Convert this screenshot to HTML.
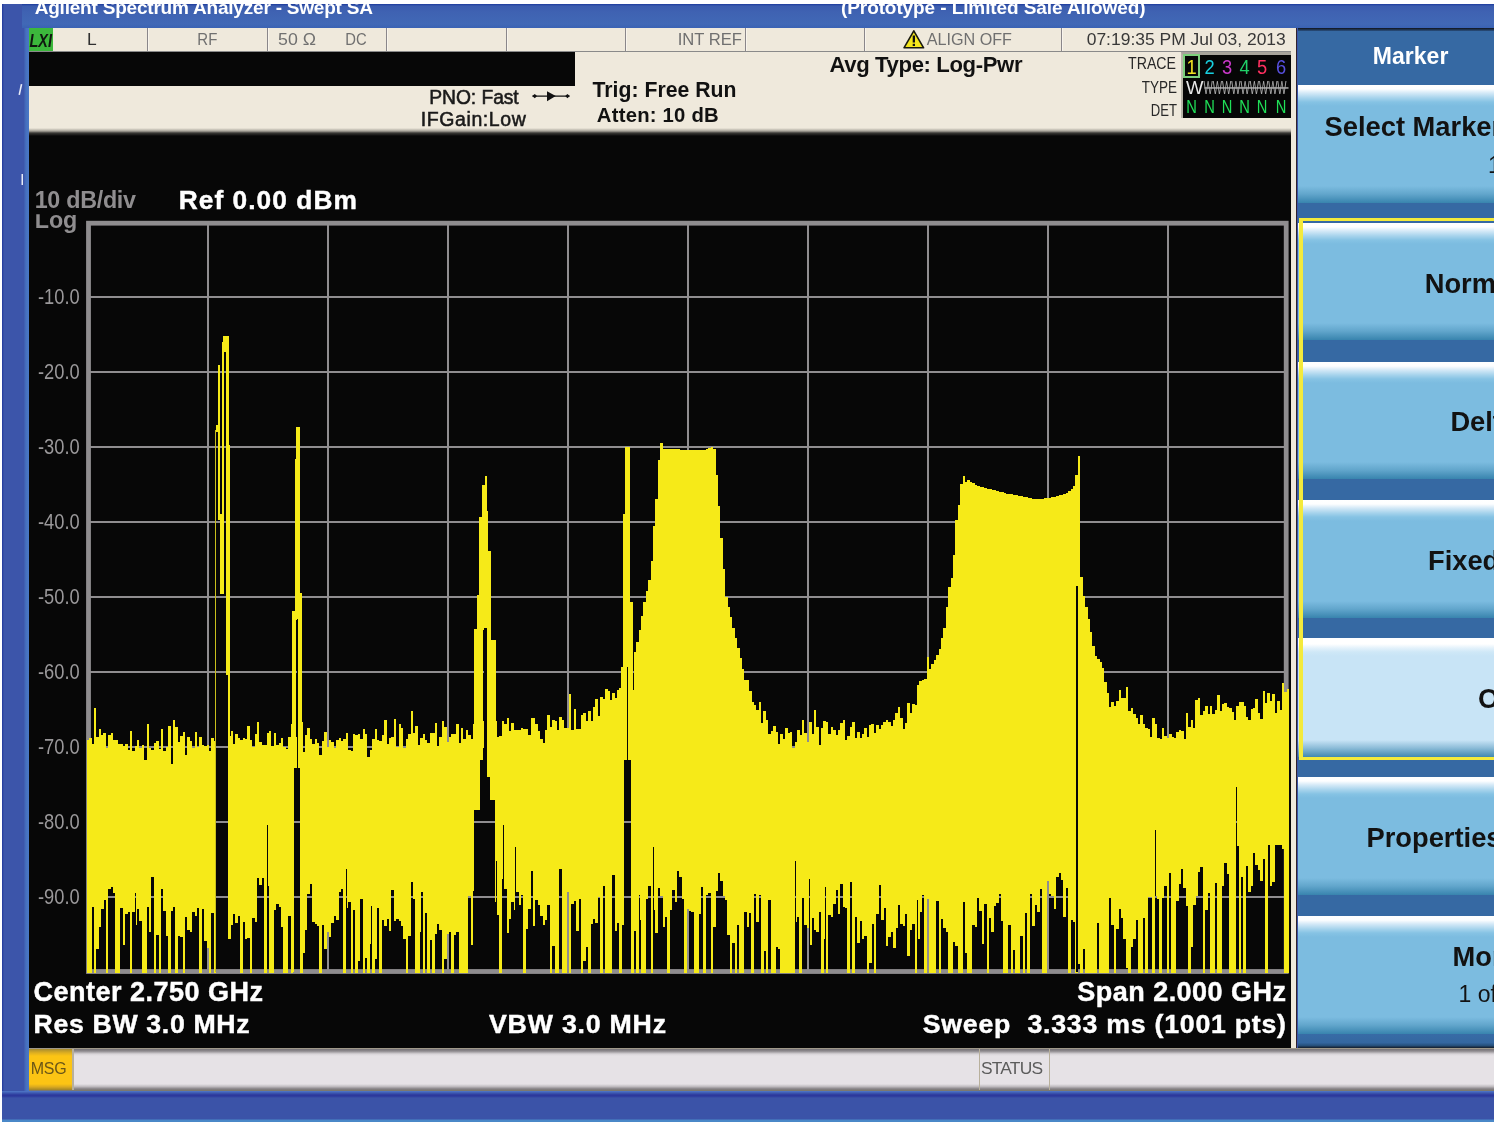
<!DOCTYPE html>
<html><head><meta charset="utf-8"><title>Agilent Spectrum Analyzer - Swept SA</title>
<style>
html,body{margin:0;padding:0;background:#fff;}
body{width:1500px;height:1122px;position:relative;overflow:hidden;font-family:"Liberation Sans",Arial,sans-serif;}
div{position:absolute;box-sizing:border-box;}
#win{left:2px;top:4px;width:1492px;height:1118px;background:#3b54a8;overflow:hidden}
#title{left:0;top:0;width:1492px;height:24px;background:linear-gradient(#1c3a9c 0,#3b5cae 2px,#3f62b2 8px,#4168b6 20px,#3a62b4 24px);}
#leftstrip{left:0;top:0;width:27px;height:1118px;background:linear-gradient(90deg,#20389c 0,#3c55aa 2px,#3c55aa 21.5px,#4670be 24px,#4a78c6 27px);}
#titlefill{left:20px;top:0;width:1472px;height:24px;background:linear-gradient(#1c3a9c 0,#3b5cae 2px,#3f62b2 8px,#4168b6 20px,#3a62b4 24px);}
#bottomblue{left:0;top:1087px;width:1492px;height:31px;background:linear-gradient(#5078c8 0,#3c58b0 2px,#2c389c 4px,#2c389c 5px,#3b53a8 7px,#3b53a8 28px,#4a88c8 29px);}
#main{left:29px;top:28px;width:1268px;height:1020px;background:#070707;}
#statrow{left:0;top:0;width:1268px;height:24px;background:#efe9dc;border-bottom:1px solid #8a8a8a}
.sep{top:0;width:2px;height:23px;background:linear-gradient(90deg,#8a868a 0,#8a868a 1.4px,#f8f4ec 1.4px)}
#lxi{left:0;top:0;width:24px;height:23px;background:#3cb83c}
#cream1{left:0;top:58px;width:1268px;height:45px;background:#efe9dc}
#cream2{left:546px;top:24px;width:722px;height:40px;background:#efe9dc}
#shadow{left:0;top:100px;width:1268px;height:8px;background:linear-gradient(#efe9dc 0,#a8a49a 3px,#3a3936 5px,#070707 8px)}
#tracebox{left:1152.4px;top:24px;width:109.6px;height:66.3px;background:#060606;border-left:2px solid #b8b4a8;border-top:3px solid #a8a49c}
#sel{left:0px;top:-0.6px;width:16.5px;height:23.5px;border:2px solid #7cd07c}
#rstrip{left:1261.7px;top:0;width:6.8px;height:1020px;background:#efe9dc;border-right:1px solid #30242c}
#panel{left:1298px;top:28px;width:196px;height:1020px;background:#3669a3;overflow:hidden}
#ptop{left:0;top:0;width:196px;height:3px;background:linear-gradient(#10141c,#2a5080)}
.btn{left:0;width:196px;background:linear-gradient(#fff 0,#fdfeff 4px,#d4e9f7 8px,#a6d3ec 13px,#86c3e4 17px,#7cbce0 21px,#7cbce0 calc(100% - 17px),#62a6cc calc(100% - 9px),#3884ae 100%);}
.btn.light{background:linear-gradient(#fff 0,#fff 6px,#e4f2fb 10px,#cfe8f7 14px,#c8e4f6 18px,#c8e4f6 calc(100% - 17px),#8cbcd8 calc(100% - 9px),#4088b0 100%);}
#ysel{left:1px;top:189.5px;width:210px;height:542px;border:3.5px solid #f4ea3c;border-left-width:4px;border-right:none;}
#pbot{left:0;top:1006px;width:196px;height:14px;background:linear-gradient(#386ca6 0,#3467a0 62%,#26507c 82%,#141c28 100%)}
#status{left:29px;top:1047.7px;width:1465px;height:43.3px;background:linear-gradient(#b0a890 0,#7c787c 1.5px,#8c888c 3px,#d8d4d8 6px,#e6e2e6 8px,#e6e2e6 36px,#c0bcc0 38.5px,#848084 41px,#7c7870 42.5px,#a09880 43.3px);}
#msg{left:0;top:1.3px;width:43px;height:41px;background:linear-gradient(#a88c30 0,#e0b020 4px,#fcc414 7px,#fcc414 35px,#d8a820 38px,#a08428 41px)}
.ssep{top:1px;width:1.5px;height:41px;background:#b8b09c}
</style></head><body>
<div id="win">
<div id="leftstrip"></div><div id="titlefill"></div>
<div id="bottomblue"></div>
</div>
<div id="main">
 <div id="cream2"></div><div id="cream1"></div><div id="shadow"></div>
 <div id="statrow"><div id="lxi"></div>
 <div class="sep" style="left:118px"></div><div class="sep" style="left:237.7px"></div><div class="sep" style="left:357px"></div><div class="sep" style="left:476.5px"></div><div class="sep" style="left:596px"></div><div class="sep" style="left:715.8px"></div><div class="sep" style="left:835px"></div><div class="sep" style="left:1031.7px"></div>
 </div>
 <div id="rstrip"></div>
 <div id="tracebox"><div id="sel"></div></div>
</div>
<div id="panel"><div id="ptop"></div><div class="btn" style="top:56.8px;height:118.00000000000001px"></div><div class="btn" style="top:194.8px;height:117.69999999999999px"></div><div class="btn" style="top:334px;height:117px"></div><div class="btn" style="top:472px;height:117.5px"></div><div class="btn light" style="top:610px;height:118.5px"></div><div class="btn" style="top:749.3px;height:117.70000000000005px"></div><div class="btn" style="top:888.3px;height:117.70000000000005px"></div><div id="ysel"></div><div id="pbot"></div><svg width="196" height="1020" style="position:absolute;left:0;top:0;will-change:transform" font-family="Liberation Sans, Arial, sans-serif"><text x="112.59999999999991" y="35.7" font-size="24.4" font-weight="bold" fill="#fff" text-anchor="middle" textLength="75.5" lengthAdjust="spacingAndGlyphs">Marker</text><text x="26.6" y="107.6" font-size="27.3" font-weight="bold" fill="#121212">Select Marker</text><text x="190.0" y="144.5" font-size="23.0" font-weight="normal" fill="#121212">1</text><text x="126.7" y="265.0" font-size="27.3" font-weight="bold" fill="#121212">Normal</text><text x="152.4" y="403.4" font-size="27.3" font-weight="bold" fill="#121212">Delta</text><text x="130.0" y="542.4" font-size="27.3" font-weight="bold" fill="#121212">Fixed</text><text x="180.0" y="680.4" font-size="27.3" font-weight="bold" fill="#121212">Off</text><text x="68.5" y="818.5" font-size="27.3" font-weight="bold" fill="#121212">Properties</text><text x="154.5" y="938.3" font-size="27.3" font-weight="bold" fill="#121212">More</text><text x="160.6" y="974.3" font-size="23.0" font-weight="normal" fill="#121212">1 of 2</text></svg></div>
<div id="status"><div id="msg"></div><div class="ssep" style="left:43px"></div><div class="ssep" style="left:949.5px"></div><div class="ssep" style="left:1019.5px"></div></div>
<svg width="1500" height="1122" viewBox="0 0 1500 1122" style="position:absolute;left:0;top:0;will-change:transform" font-family="Liberation Sans, Arial, sans-serif">
<rect x="88.5" y="223.2" width="1197.7" height="748.3" fill="none" stroke="#8f8d8f" stroke-width="4.8"/><defs><clipPath id="logclip"><rect x="30" y="214.3" width="60" height="30"/></clipPath></defs><g shape-rendering="crispEdges"><rect x="206.7" y="223.2" width="2" height="748.3" fill="#8f8d8f"/><rect x="88.5" y="296.3" width="1197.7" height="2" fill="#8f8d8f"/><rect x="326.7" y="223.2" width="2" height="748.3" fill="#8f8d8f"/><rect x="88.5" y="371.3" width="1197.7" height="2" fill="#8f8d8f"/><rect x="446.7" y="223.2" width="2" height="748.3" fill="#8f8d8f"/><rect x="88.5" y="446.3" width="1197.7" height="2" fill="#8f8d8f"/><rect x="566.7" y="223.2" width="2" height="748.3" fill="#8f8d8f"/><rect x="88.5" y="521.3" width="1197.7" height="2" fill="#8f8d8f"/><rect x="686.7" y="223.2" width="2" height="748.3" fill="#8f8d8f"/><rect x="88.5" y="596.3" width="1197.7" height="2" fill="#8f8d8f"/><rect x="806.7" y="223.2" width="2" height="748.3" fill="#8f8d8f"/><rect x="88.5" y="671.3" width="1197.7" height="2" fill="#8f8d8f"/><rect x="926.7" y="223.2" width="2" height="748.3" fill="#8f8d8f"/><rect x="88.5" y="746.3" width="1197.7" height="2" fill="#8f8d8f"/><rect x="1046.7" y="223.2" width="2" height="748.3" fill="#8f8d8f"/><rect x="88.5" y="821.3" width="1197.7" height="2" fill="#8f8d8f"/><rect x="1166.7" y="223.2" width="2" height="748.3" fill="#8f8d8f"/><rect x="88.5" y="896.3" width="1197.7" height="2" fill="#8f8d8f"/><path d="M86.6 740H89V972.5H86.6ZM89 738.3H91.5V972.5H89ZM91.4 743.8H93.9V907.2H91.4ZM93.8 708.4H96.3V972.5H93.8ZM96.2 736.8H98.7V949.2H96.2ZM98.6 729.2H101.1V927.4H98.6ZM101 734.5H103.5V909.2H101ZM103.4 733.4H105.9V900.3H103.4ZM105.8 747.8H108.3V972.5H105.8ZM108.2 735.3H110.7V888.8H108.2ZM110.6 733.3H113.1V887.1H110.6ZM113 740.3H115.5V893.2H113ZM115.4 740.1H117.9V972.5H115.4ZM117.8 743.7H120.3V972.5H117.8ZM120.2 743.9H122.7V908H120.2ZM122.6 745.8H125.1V945.3H122.6ZM125 744.2H127.5V914.3H125ZM127.4 749.8H129.9V912.1H127.4ZM129.8 730.9H132.3V972.5H129.8ZM132.2 751.4H134.7V911.5H132.2ZM134.6 746.4H135.9V893H134.6ZM135.8 746.4H137.1V924.8H135.8ZM137 740.4H139.4V908.8H137ZM139.4 748.2H141.8V921.4H139.4ZM141.8 744.6H144.2V972.5H141.8ZM144.2 759.5H146.6V972.5H144.2ZM146.6 723.5H149V906.6H146.6ZM149 748.1H151.4V931.6H149ZM151.4 749.9H153.8V877.4H151.4ZM153.8 742.8H156.2V972.5H153.8ZM156.2 740.7H158.6V935.2H156.2ZM158.6 748.5H161V972.5H158.6ZM161 729.4H163.4V889.3H161ZM163.4 751.2H165.8V911.1H163.4ZM165.8 747.3H168.2V935.5H165.8ZM168.2 725.9H170.6V972.5H168.2ZM170.6 763.7H173V910.5H170.6ZM173 719.6H175.4V907.2H173ZM175.4 726.7H177.8V972.5H175.4ZM177.8 741.8H180.2V936.3H177.8ZM180.2 735.9H182.6V936.7H180.2ZM182.6 731.5H185V972.5H182.6ZM185 755.1H187.4V916.5H185ZM187.4 736.8H189.8V929.9H187.4ZM189.8 741.1H192.2V932.4H189.8ZM192.2 748.3H194.6V911.6H192.2ZM194.6 731.8H197V916.1H194.6ZM197 746.7H199.4V908.2H197ZM199.4 736.7H201.8V972.5H199.4ZM201.8 744.6H204.2V909.2H201.8ZM204.2 746.3H206.6V941.4H204.2ZM206.6 745.3H209V948.2H206.6ZM209 750.8H211.4V972.5H209ZM211.4 738.1H213.8V913.1H211.4ZM213.8 740.7H216.2V972.5H213.8ZM228.2 736.3H230.6V939.1H228.2ZM230.6 731.3H233V925.4H230.6ZM233 744.1H235.4V914.2H233ZM235.4 733.5H237.8V923.4H235.4ZM237.8 737.7H240.2V915.9H237.8ZM240.2 740.3H242.6V972.5H240.2ZM242.6 737.6H245V921.5H242.6ZM245 739H247.4V939.1H245ZM247.4 726.1H249.8V938H247.4ZM249.8 739.8H252.2V972.5H249.8ZM252.2 747.2H254.6V918.2H252.2ZM254.6 733.8H257V922.1H254.6ZM257 722.4H259.4V878H257ZM259.4 742.2H261.8V885.4H259.4ZM261.8 745.3H264.2V878.4H261.8ZM264.2 744.6H266.6V972.5H264.2ZM266.6 732.9H267.8V825.1H266.6ZM267.8 732.9H269V886H267.8ZM269 730.8H271.4V972.5H269ZM271.4 745.9H273.8V972.5H271.4ZM273.8 732.8H276.2V909.5H273.8ZM276.2 745.2H278.6V904.2H276.2ZM278.6 743.1H281V907H278.6ZM281 738H283.4V926.7H281ZM283.4 747.1H285.8V972.5H283.4ZM285.8 748.7H288.2V972.5H285.8ZM288.2 736.6H290.6V915.6H288.2ZM290.6 724H293V972.5H290.6ZM293 740.9H294.2V910H293ZM294.2 740.9H295.4V768H294.2ZM295.4 736.5H297.8V768H295.4ZM297.8 753.2H300.2V768H297.8ZM300.2 722.2H302.6V972.5H300.2ZM302.6 752.1H305V953.1H302.6ZM305 735.1H307.4V930.4H305ZM307.4 728.4H309.8V893.7H307.4ZM309.8 739.2H312.2V884H309.8ZM312.2 743.8H314.6V921.7H312.2ZM314.6 739.4H317V924.2H314.6ZM317 742.9H319.4V925.9H317ZM319.4 754.9H321.8V972.5H319.4ZM321.8 740.5H324.2V925.4H321.8ZM324.2 731.9H326.6V949.1H324.2ZM326.6 746.5H329V931.6H326.6ZM329 740.1H331.4V936.5H329ZM331.4 741.9H333.8V923.3H331.4ZM333.8 747.6H336.2V916.2H333.8ZM336.2 739.8H338.6V920.3H336.2ZM338.6 737.7H341V891.9H338.6ZM341 740.7H343.4V889H341ZM343.4 739.3H345.8V972.5H343.4ZM345.8 732.7H347V868.9H345.8ZM347 732.7H348.2V907.5H347ZM348.2 750.1H350.6V902.4H348.2ZM350.6 751H353V972.5H350.6ZM353 733.8H355.4V910.2H353ZM355.4 734.8H357.8V972.5H355.4ZM357.8 733.7H360.2V960.7H357.8ZM360.2 739.3H362.6V899.2H360.2ZM362.6 728.8H365V972.5H362.6ZM365 734.3H367.4V958H365ZM367.4 756.6H369.8V972.5H367.4ZM369.8 749.8H371V943.9H369.8ZM371 749.8H372.2V906.3H371ZM372.2 738.6H374.6V972.5H372.2ZM374.6 729.2H377V958.5H374.6ZM377 739.8H379.4V907.6H377ZM379.4 740.9H381.8V972.5H379.4ZM381.8 734.8H384.2V920.1H381.8ZM384.2 719.9H386.6V926.3H384.2ZM386.6 743.5H389V919.4H386.6ZM389 737.8H391.4V931.2H389ZM391.4 736.7H393.8V890.4H391.4ZM393.8 718.9H396.2V921H393.8ZM396.2 747.2H398.6V919.3H396.2ZM398.6 724.2H401V920.8H398.6ZM401 728H403.4V926H401ZM403.4 748.1H405.8V938.7H403.4ZM405.8 739H408.2V972.5H405.8ZM408.2 733.5H410.6V936.4H408.2ZM410.6 710.6H413V882.4H410.6ZM413 733.3H415.4V899H413ZM415.4 726H417.8V972.5H415.4ZM417.8 745H420.2V972.5H417.8ZM420.2 738.4H421.4V931.9H420.2ZM421.4 738.4H422.6V892.2H421.4ZM422.6 734.4H425V972.5H422.6ZM425 739.8H427.4V913H425ZM427.4 742.6H429.8V972.5H427.4ZM429.8 732.5H432.2V939.7H429.8ZM432.2 732.9H434.6V972.5H432.2ZM434.6 723.3H437V934.3H434.6ZM437 745.9H439.4V923.6H437ZM439.4 736.5H441.8V930H439.4ZM441.8 721.4H444.2V972.5H441.8ZM444.2 726.7H446.6V959.4H444.2ZM446.6 742H449V934.4H446.6ZM449 736.5H451.4V931.9H449ZM451.4 734.1H453.8V972.5H451.4ZM453.8 734H456.2V934.8H453.8ZM456.2 724.1H458.6V932.1H456.2ZM458.6 743.4H461V972.5H458.6ZM461 727.6H463.4V972.5H461ZM463.4 739H465.8V972.5H463.4ZM465.8 730.1H468.2V972.5H465.8ZM468.2 735.1H470.6V896.2H468.2ZM470.6 738.6H473V945.1H470.6ZM473 723.8H474.2V891.1H473ZM474.2 723.8H475.4V807H474.2ZM475.4 737.3H477.8V792H475.4ZM477.8 714.3H479V792H477.8ZM479 714.3H480.2V777H479ZM480.2 734.8H482.6V748H480.2ZM482.6 720.9H485V748H482.6ZM485 742H487.4V748H485ZM487.4 724.5H489.8V777H487.4ZM489.8 744.8H492.2V792H489.8ZM492.2 719.2H494.6V792H492.2ZM494.6 721.1H495.8V902.4H494.6ZM495.8 721.1H497V861.4H495.8ZM497 736.8H499.4V915H497ZM499.4 736.2H501.8V972.5H499.4ZM501.8 720.6H503V879.4H501.8ZM503 720.6H504.2V825.4H503ZM504.2 724H506.6V888.5H504.2ZM506.6 717.5H509V933.4H506.6ZM509 730.7H511.4V918.7H509ZM511.4 723.2H513.8V901.9H511.4ZM513.8 729.5H515V910.2H513.8ZM515 729.5H516.2V847.2H515ZM516.2 729.9H518.6V891.7H516.2ZM518.6 730.3H521V904.8H518.6ZM521 728.4H523.4V894.7H521ZM523.4 728.7H525.8V972.5H523.4ZM525.8 729.3H528.2V928.6H525.8ZM528.2 734.6H530.6V909H528.2ZM530.6 718.4H533V870.7H530.6ZM533 717.7H535.4V926.1H533ZM535.4 723.8H537.8V899.6H535.4ZM537.8 731.3H540.2V905.1H537.8ZM540.2 738.5H542.6V915.7H540.2ZM542.6 743.2H545V925.3H542.6ZM545 730.3H547.4V919.9H545ZM547.4 715.2H549.8V904.8H547.4ZM549.8 727H552.2V972.5H549.8ZM552.2 719.7H554.6V945.9H552.2ZM554.6 721.1H557V972.5H554.6ZM557 730.3H559.4V972.5H557ZM559.4 716.5H561.8V869.1H559.4ZM561.8 719.5H564.2V972.5H561.8ZM564.2 728.3H566.6V972.5H564.2ZM566.6 727.5H569V892.2H566.6ZM569 693.8H571.4V972.5H569ZM571.4 730H573.8V904.2H571.4ZM573.8 708.7H576.2V901.3H573.8ZM576.2 728.9H578.6V930.7H576.2ZM578.6 729.2H581V899H578.6ZM581 714.5H583.4V972.5H581ZM583.4 713H585.8V961.2H583.4ZM585.8 720.5H588.2V946.7H585.8ZM588.2 710.5H590.6V972.5H588.2ZM590.6 720.9H593V924H590.6ZM593 706.6H595.4V918.5H593ZM595.4 699.2H597.8V922.6H595.4ZM597.8 715.8H600.2V896.9H597.8ZM600.2 697.1H602.6V972.5H600.2ZM602.6 698.7H605V886H602.6ZM605 689.3H607.5V972.5H605ZM607.4 690.7H609.9V972.5H607.4ZM609.8 699.7H612.3V972.5H609.8ZM612.2 692.5H614.7V874.8H612.2ZM614.6 697.9H617.1V931.3H614.6ZM617 689.6H619.5V923.4H617ZM619.4 687.7H621.9V972.5H619.4ZM621.8 684.6H624.3V924.9H621.8ZM624.2 694H626.7V754H624.2ZM626.6 683.3H629.1V754H626.6ZM629 686.2H631.5V754H629ZM631.4 689.8H633.9V972.5H631.4ZM633.8 652.3H636.3V931.1H633.8ZM636.2 641.9H638.7V972.5H636.2ZM638.6 630.3H639.9V894.5H638.6ZM639.8 630.3H641.1V920H639.8ZM641 616.3H643.5V972.5H641ZM643.4 602.3H645.9V972.5H643.4ZM645.8 591H648.3V898.8H645.8ZM648.2 580.2H650.7V885.6H648.2ZM650.6 561.2H653.1V972.5H650.6ZM653 525.8H654.3V847.2H653ZM654.2 525.8H655.5V910.1H654.2ZM655.4 498.5H657.9V933.1H655.4ZM657.8 460.3H660.3V887.6H657.8ZM660.2 443.4H662.7V896.2H660.2ZM662.6 449H665.1V926.6H662.6ZM665 449.1H667.5V917.4H665ZM667.4 449.2H669.9V972.5H667.4ZM669.8 449.2H672.3V909.6H669.8ZM672.2 449.3H674.7V890.4H672.2ZM674.6 449.3H677.1V901.5H674.6ZM677 449.4H679.5V871.3H677ZM679.4 449.5H681.9V876.5H679.4ZM681.8 449.5H684.3V898.9H681.8ZM684.2 449.6H686.7V972.5H684.2ZM686.6 449.7H689.1V909.4H686.6ZM689 449.7H691.5V911.3H689ZM691.4 449.8H693.9V911.7H691.4ZM693.8 449.9H696.3V972.5H693.8ZM696.2 449.9H698.7V972.5H696.2ZM698.6 450H701.1V913.7H698.6ZM701 449.8H703.5V886.5H701ZM703.4 449.5H705.9V972.5H703.4ZM705.8 449.2H708.3V895.2H705.8ZM708.2 448.2H710.7V892.7H708.2ZM710.6 446.6H713.1V972.5H710.6ZM713 449H715.5V927H713ZM715.4 475.4H717.9V890.9H715.4ZM717.8 506.3H720.3V872.9H717.8ZM720.2 538.1H722.7V881.1H720.2ZM722.6 568.5H725.1V896.1H722.6ZM725 596.9H727.5V899.7H725ZM727.4 607.1H729.9V935.4H727.4ZM729.8 617.4H732.3V972.5H729.8ZM732.2 627.7H734.7V942.8H732.2ZM734.6 637.6H737.1V972.5H734.6ZM737 647.5H739.5V924.5H737ZM739.4 657.9H741.9V972.5H739.4ZM741.8 669.4H744.3V972.5H741.8ZM744.2 680.2H746.7V912.1H744.2ZM746.6 680H749.1V926.7H746.6ZM749 691.2H751.5V913H749ZM751.4 701.5H753.9V972.5H751.4ZM753.8 705.2H756.3V894.2H753.8ZM756.2 710H758.7V922.3H756.2ZM758.6 701.9H761.1V895H758.6ZM761 723.3H763.5V972.5H761ZM763.4 711.2H765.9V951H763.4ZM765.8 720.2H768.3V972.5H765.8ZM768.2 734.1H770.7V899.7H768.2ZM770.6 731.3H773.1V972.5H770.6ZM773 726.4H775.5V972.5H773ZM775.4 731.5H777.9V946.5H775.4ZM777.8 744.2H780.3V949H777.8ZM780.2 733.9H782.7V972.5H780.2ZM782.6 738.9H785.1V972.5H782.6ZM785 728H787.5V972.5H785ZM787.4 733.2H789.9V972.5H787.4ZM789.8 732.1H792.3V972.5H789.8ZM792.2 748H794.7V972.5H792.2ZM794.6 741.7H795.9V860.9H794.6ZM795.8 741.7H797.1V922.2H795.8ZM797 730.3H799.5V916.6H797ZM799.4 734.7H801.9V972.5H799.4ZM801.8 719.9H804.3V898.1H801.8ZM804.2 732.9H806.7V925H804.2ZM806.6 741.6H809.1V927.7H806.6ZM809 722.4H810.3V879.1H809ZM810.2 722.4H811.5V945H810.2ZM811.4 734.3H813.9V918.2H811.4ZM813.8 709.6H816.3V929.5H813.8ZM816.2 726.8H818.7V932.1H816.2ZM818.6 744.7H821.1V912.3H818.6ZM821 728.4H823.5V972.5H821ZM823.4 721H824.7V939.4H823.4ZM824.6 721H825.9V887.4H824.6ZM825.8 721.6H828.3V972.5H825.8ZM828.2 733.8H830.7V914.8H828.2ZM830.6 726.5H833.1V917.1H830.6ZM833 729.9H835.5V903.7H833ZM835.4 735.1H837.9V890.2H835.4ZM837.8 730.4H840.3V914.3H837.8ZM840.2 722.8H842.7V883.5H840.2ZM842.6 720.3H845.1V907.2H842.6ZM845 740.2H847.5V908.3H845ZM847.4 735.9H849.9V972.5H847.4ZM849.8 727.3H852.3V882.3H849.8ZM852.2 721.7H854.7V972.5H852.2ZM854.6 737.6H857.1V916.5H854.6ZM857 731.6H859.5V943.3H857ZM859.4 738.4H861.9V921H859.4ZM861.8 733.7H864.3V939.3H861.8ZM864.2 727.8H866.7V935.6H864.2ZM866.6 737.3H869.1V972.5H866.6ZM869 725H871.5V962.9H869ZM871.4 723.9H873.9V923.9H871.4ZM873.8 733.1H876.3V972.5H873.8ZM876.2 725.1H878.7V913.5H876.2ZM878.6 729.4H881.1V884.6H878.6ZM881 724.8H883.5V920.4H881ZM883.4 721.6H885.9V907.8H883.4ZM885.8 720.1H888.3V945.7H885.8ZM888.2 721.7H890.7V937.2H888.2ZM890.6 725.7H893.1V931.9H890.6ZM893 719.9H895.5V948.4H893ZM895.4 713.3H897.9V927.8H895.4ZM897.8 707.4H900.3V905.1H897.8ZM900.2 718.3H902.7V924.2H900.2ZM902.6 728.5H905.1V926H902.6ZM905 722.9H907.5V913.8H905ZM907.4 703.1H909.9V955.6H907.4ZM909.8 712.5H912.3V929.7H909.8ZM912.2 704.1H914.7V924.2H912.2ZM914.6 705.3H917.1V972.5H914.6ZM917 685.4H918.3V899.9H917ZM918.2 685.4H919.5V938.6H918.2ZM919.4 681.4H921.9V911.9H919.4ZM921.8 680.1H924.3V895.2H921.8ZM924.2 679H926.7V972.5H924.2ZM926.6 656.7H929.1V898.5H926.6ZM929 668.7H931.5V972.5H929ZM931.4 664.2H933.9V972.5H931.4ZM933.8 659.6H936.3V972.5H933.8ZM936.2 655H938.7V900.5H936.2ZM938.6 648.5H941.1V972.5H938.6ZM941 638.1H943.5V918.7H941ZM943.4 627.7H945.9V927.7H943.4ZM945.8 607H948.3V931.8H945.8ZM948.2 586.5H950.7V972.5H948.2ZM950.6 577.5H953.1V972.5H950.6ZM953 555.2H955.5V942H953ZM955.4 520.4H957.9V946.4H955.4ZM957.8 505.3H960.3V972.5H957.8ZM960.2 484.3H962.7V972.5H960.2ZM962.6 476.2H965.1V902.2H962.6ZM965 481.8H967.5V953.3H965ZM967.4 480.4H969.9V972.5H967.4ZM969.8 481.8H972.3V972.5H969.8ZM972.2 483.2H974.7V924.5H972.2ZM974.6 484.7H977.1V926.7H974.6ZM977 486.1H979.5V897.5H977ZM979.4 486.7H981.9V910.9H979.4ZM981.8 487.3H984.3V944.2H981.8ZM984.2 487.9H986.7V903.7H984.2ZM986.6 488.5H989.1V972.5H986.6ZM989 489.2H991.5V917.9H989ZM991.4 489.8H993.9V932.1H991.4ZM993.8 490.4H996.3V906H993.8ZM996.2 491H998.7V902.5H996.2ZM998.6 491.6H1001.1V893.6H998.6ZM1001 492.3H1003.5V921.2H1001ZM1003.4 492.9H1005.9V972.5H1003.4ZM1005.8 493.5H1008.3V972.5H1005.8ZM1008.2 494H1010.7V924.9H1008.2ZM1010.6 494.4H1013.1V972.5H1010.6ZM1013 494.9H1015.5V950.1H1013ZM1015.4 495.3H1017.9V972.5H1015.4ZM1017.8 495.8H1020.3V972.5H1017.8ZM1020.2 496.2H1022.7V936.1H1020.2ZM1022.6 496.7H1025.1V972.5H1022.6ZM1025 497.1H1027.5V912.9H1025ZM1027.4 497.6H1029.9V972.5H1027.4ZM1029.8 498.1H1032.3V894.1H1029.8ZM1032.2 498.5H1034.7V926.2H1032.2ZM1034.6 499H1037.1V905.4H1034.6ZM1037 498.8H1039.5V912H1037ZM1039.4 498.7H1041.9V889.1H1039.4ZM1041.8 498.5H1044.3V972.5H1041.8ZM1044.2 498.3H1046.7V972.5H1044.2ZM1046.6 498.2H1049.1V880.8H1046.6ZM1049 497.9H1051.5V893.5H1049ZM1051.4 497.3H1053.9V895.9H1051.4ZM1053.8 496.6H1056.3V908.9H1053.8ZM1056.2 495.9H1058.7V876.7H1056.2ZM1058.6 495.2H1061.1V873.3H1058.6ZM1061 494.6H1063.5V880.4H1061ZM1063.4 493.9H1065.9V916.5H1063.4ZM1065.8 492.7H1068.3V887.7H1065.8ZM1068.2 490.9H1070.7V972.5H1068.2ZM1070.6 489.1H1073.1V919.7H1070.6ZM1073 485.7H1075.5V922H1073ZM1075.4 475.2H1077.9V972.5H1075.4ZM1077.8 456H1080.3V964.1H1077.8ZM1080.2 577.2H1082.7V972.5H1080.2ZM1082.6 596H1085.1V948.6H1082.6ZM1085 606.7H1087.5V972.5H1085ZM1087.4 619.2H1089.9V972.5H1087.4ZM1089.8 632H1092.3V972.5H1089.8ZM1092.2 645.8H1094.7V972.5H1092.2ZM1094.6 656H1097.1V972.5H1094.6ZM1097 659.1H1099.5V923.2H1097ZM1099.4 662.2H1101.9V972.5H1099.4ZM1101.8 668H1104.3V972.5H1101.8ZM1104.2 681.9H1106.7V972.5H1104.2ZM1106.6 692.7H1109.1V972.5H1106.6ZM1109 706.6H1111.5V897.7H1109ZM1111.4 701.5H1113.9V925.1H1111.4ZM1113.8 706.2H1116.3V972.5H1113.8ZM1116.2 701.2H1118.7V929.4H1116.2ZM1118.6 689.6H1121.1V908.7H1118.6ZM1121 697.9H1123.5V918.4H1121ZM1123.4 697.6H1125.9V939H1123.4ZM1125.8 687.1H1128.3V968.1H1125.8ZM1128.2 711H1130.7V972.5H1128.2ZM1130.6 707.5H1133.1V946.7H1130.6ZM1133 713.7H1135.5V939H1133ZM1135.4 717.8H1137.9V920.3H1135.4ZM1137.8 724.3H1140.3V972.5H1137.8ZM1140.2 714.8H1142.7V972.5H1140.2ZM1142.6 723.6H1145.1V917.8H1142.6ZM1145 728.1H1147.5V972.5H1145ZM1147.4 728.9H1149.9V897.3H1147.4ZM1149.8 737.1H1152.3V896.9H1149.8ZM1152.2 718.3H1154.7V972.5H1152.2ZM1154.6 724.1H1155.9V829.7H1154.6ZM1155.8 724.1H1157.1V896.3H1155.8ZM1157 738.4H1159.5V898.8H1157ZM1159.4 739.3H1161.9V972.5H1159.4ZM1161.8 727.9H1164.3V898.1H1161.8ZM1164.2 735.9H1166.7V885.7H1164.2ZM1166.6 737.5H1169.1V972.5H1166.6ZM1169 733.5H1171.5V873.1H1169ZM1171.4 736.6H1173.9V972.5H1171.4ZM1173.8 738.4H1176.3V972.5H1173.8ZM1176.2 732.3H1178.7V901.1H1176.2ZM1178.6 730.1H1181.1V883.8H1178.6ZM1181 731.4H1183.5V869.3H1181ZM1183.4 738.6H1185.9V887.5H1183.4ZM1185.8 713.2H1188.3V906H1185.8ZM1188.2 726.9H1190.7V972.5H1188.2ZM1190.6 719.7H1193.1V946.8H1190.6ZM1193 727.6H1195.5V905.1H1193ZM1195.4 699.8H1197.9V895.9H1195.4ZM1197.8 697.8H1200.3V871.7H1197.8ZM1200.2 715.2H1202.7V867.4H1200.2ZM1202.6 711H1205.1V972.5H1202.6ZM1205 706.4H1207.5V909.9H1205ZM1207.4 714H1209.9V892.5H1207.4ZM1209.8 706.3H1212.3V972.5H1209.8ZM1212.2 713.9H1214.7V972.5H1212.2ZM1214.6 710.3H1217.1V883H1214.6ZM1217 694.5H1219.5V972.5H1217ZM1219.4 711.3H1221.9V972.5H1219.4ZM1221.8 704H1224.3V886.3H1221.8ZM1224.2 702.5H1226.7V862.6H1224.2ZM1226.6 706.5H1229.1V874.3H1226.6ZM1229 708.3H1231.5V972.5H1229ZM1231.4 711.7H1233.9V972.5H1231.4ZM1233.8 719.5H1236.3V972.5H1233.8ZM1236.2 706H1237.5V786.9H1236.2ZM1237.4 706H1238.7V845.5H1237.4ZM1238.6 701.6H1241.1V972.5H1238.6ZM1241 702.4H1243.5V876.5H1241ZM1243.4 705.8H1245.9V972.5H1243.4ZM1245.8 717.3H1248.3V866.2H1245.8ZM1248.2 720.4H1250.7V892.1H1248.2ZM1250.6 708.8H1253.1V885.8H1250.6ZM1253 708.3H1255.5V852.5H1253ZM1255.4 698.9H1257.9V865.2H1255.4ZM1257.8 713H1260.3V869.5H1257.8ZM1260.2 719.3H1262.7V880.6H1260.2ZM1262.6 690.8H1265.1V859.1H1262.6ZM1265 703H1267.5V972.5H1265ZM1267.4 693.4H1269.9V845H1267.4ZM1269.8 701.1H1272.3V886.4H1269.8ZM1272.2 693.6H1274.7V882.4H1272.2ZM1274.6 713.4H1277.1V845H1274.6ZM1277 700.9H1279.5V845H1277ZM1279.4 710.2H1281.9V845H1279.4ZM1281.8 683H1284.3V848.7H1281.8ZM1284.2 692.3H1286.7V972.5H1284.2ZM1286.6 689.4H1288.5V972.5H1286.6Z" fill="#f6ea18"/><rect x="214.6" y="430" width="1.4" height="542" fill="#c9bf1c"/><rect x="216.0" y="425" width="1.6" height="7" fill="#f6ea18"/><rect x="218.3" y="365" width="1.5" height="155" fill="#f6ea18"/><rect x="219.8" y="514" width="4.4" height="80" fill="#f6ea18"/><rect x="222.2" y="342" width="2.0" height="178" fill="#f6ea18"/><rect x="223" y="336" width="5.6" height="16" fill="#f6ea18"/><rect x="226.4" y="336" width="2.3" height="339" fill="#f6ea18"/><rect x="228.4" y="675" width="1.2" height="85" fill="#f6ea18"/><rect x="227.9" y="445" width="2.5" height="235" fill="#f6ea18"/><rect x="296.2" y="427" width="3.4" height="173" fill="#f6ea18"/><rect x="294.6" y="459" width="5.0" height="161" fill="#f6ea18"/><rect x="294.6" y="593" width="7.7" height="27" fill="#f6ea18"/><rect x="292" y="611" width="4.3" height="157" fill="#f6ea18"/><rect x="298.3" y="619" width="4.1" height="149" fill="#f6ea18"/><rect x="292" y="740" width="2" height="232" fill="#f6ea18"/><rect x="300" y="740" width="2.4" height="160" fill="#f6ea18"/><rect x="484.5" y="476" width="2.5" height="44" fill="#f6ea18"/><rect x="482.2" y="485" width="4.8" height="145" fill="#f6ea18"/><rect x="482.2" y="511" width="6.1" height="114" fill="#f6ea18"/><rect x="478.6" y="517" width="9.7" height="108" fill="#f6ea18"/><rect x="478.6" y="551" width="12.5" height="74" fill="#f6ea18"/><rect x="477" y="595" width="6.4" height="165" fill="#f6ea18"/><rect x="473.8" y="629" width="9.6" height="131" fill="#f6ea18"/><rect x="486" y="623" width="5.1" height="137" fill="#f6ea18"/><rect x="487.4" y="640" width="8.4" height="120" fill="#f6ea18"/><rect x="473.8" y="720" width="6.2" height="90" fill="#f6ea18"/><rect x="490.3" y="720" width="5.7" height="80" fill="#f6ea18"/><rect x="625.4" y="447" width="4.2" height="253" fill="#f6ea18"/><rect x="622.8" y="514" width="7.2" height="186" fill="#f6ea18"/><rect x="622.6" y="602" width="10.0" height="98" fill="#f6ea18"/><rect x="621" y="667" width="12" height="93" fill="#f6ea18"/><rect x="626.8" y="667" width="1.5" height="93" fill="#070707"/><rect x="1075.8" y="586" width="2.4" height="386" fill="#070707"/><rect x="483.6" y="628" width="3.0" height="132" fill="#070707"/><rect x="296.5" y="619" width="1.9" height="151" fill="#070707"/></g>
<text x="34.7" y="14.3" font-size="19.0" font-weight="bold" fill="#fff" textLength="338.3" lengthAdjust="spacing">Agilent Spectrum Analyzer - Swept SA</text><text x="841.0" y="14.3" font-size="19.0" font-weight="bold" fill="#fff" textLength="304.5" lengthAdjust="spacing">(Prototype - Limited Sale Allowed)</text><text x="87.0" y="45.4" font-size="17.4" font-weight="normal" fill="#303030">L</text><text x="197.3" y="45.4" font-size="17.4" font-weight="normal" fill="#707070" textLength="20.0" lengthAdjust="spacingAndGlyphs">RF</text><text x="278.0" y="45.4" font-size="17.4" font-weight="normal" fill="#707070" textLength="38.0" lengthAdjust="spacingAndGlyphs">50 Ω</text><text x="345.3" y="45.4" font-size="17.4" font-weight="normal" fill="#707070" textLength="21.4" lengthAdjust="spacingAndGlyphs">DC</text><text x="677.7" y="45.4" font-size="17.4" font-weight="normal" fill="#707070" textLength="64.3" lengthAdjust="spacingAndGlyphs">INT REF</text><text x="926.7" y="45.4" font-size="17.4" font-weight="normal" fill="#707070" textLength="85.3" lengthAdjust="spacingAndGlyphs">ALIGN OFF</text><text x="1086.7" y="45.4" font-size="17.4" font-weight="normal" fill="#383838" textLength="199.1" lengthAdjust="spacingAndGlyphs">07:19:35 PM Jul 03, 2013</text><text x="429.3" y="104.0" font-size="19.3" font-weight="normal" fill="#1a1a1a" textLength="89.4" lengthAdjust="spacing" stroke="#1a1a1a" stroke-width="0.55">PNO: Fast</text><text x="420.8" y="125.9" font-size="19.5" font-weight="normal" fill="#1a1a1a" textLength="105.0" lengthAdjust="spacing" stroke="#1a1a1a" stroke-width="0.55">IFGain:Low</text><text x="592.5" y="97.3" font-size="21.2" font-weight="bold" fill="#111" textLength="144.0" lengthAdjust="spacing">Trig: Free Run</text><text x="596.8" y="122.0" font-size="20.3" font-weight="bold" fill="#111" textLength="121.9" lengthAdjust="spacing">Atten: 10 dB</text><text x="829.5" y="72.0" font-size="22.1" font-weight="bold" fill="#111" textLength="193.0" lengthAdjust="spacing">Avg Type: Log-Pwr</text><text x="1128.0" y="69.3" font-size="16.4" font-weight="normal" fill="#282828" textLength="48.0" lengthAdjust="spacingAndGlyphs">TRACE</text><text x="1141.7" y="92.5" font-size="16.7" font-weight="normal" fill="#282828" textLength="35.3" lengthAdjust="spacingAndGlyphs">TYPE</text><text x="1150.8" y="115.8" font-size="16.4" font-weight="normal" fill="#282828" textLength="26.2" lengthAdjust="spacingAndGlyphs">DET</text><text x="1186.4" y="74" font-size="19.5" fill="#f0e020" textLength="10.2" lengthAdjust="spacingAndGlyphs">1</text><text x="1186.2" y="113" font-size="18.9" fill="#20e058" textLength="10.6" lengthAdjust="spacingAndGlyphs">N</text><text x="1204.4" y="74" font-size="19.5" fill="#18d0e0" textLength="10.2" lengthAdjust="spacingAndGlyphs">2</text><text x="1204.2" y="113" font-size="18.9" fill="#20e058" textLength="10.6" lengthAdjust="spacingAndGlyphs">N</text><text x="1221.9" y="74" font-size="19.5" fill="#c838c8" textLength="10.2" lengthAdjust="spacingAndGlyphs">3</text><text x="1221.7" y="113" font-size="18.9" fill="#20e058" textLength="10.6" lengthAdjust="spacingAndGlyphs">N</text><text x="1239.4" y="74" font-size="19.5" fill="#20d068" textLength="10.2" lengthAdjust="spacingAndGlyphs">4</text><text x="1239.2" y="113" font-size="18.9" fill="#20e058" textLength="10.6" lengthAdjust="spacingAndGlyphs">N</text><text x="1256.9" y="74" font-size="19.5" fill="#ff3060" textLength="10.2" lengthAdjust="spacingAndGlyphs">5</text><text x="1256.7" y="113" font-size="18.9" fill="#20e058" textLength="10.6" lengthAdjust="spacingAndGlyphs">N</text><text x="1275.9" y="74" font-size="19.5" fill="#5850e0" textLength="10.2" lengthAdjust="spacingAndGlyphs">6</text><text x="1275.7" y="113" font-size="18.9" fill="#20e058" textLength="10.6" lengthAdjust="spacingAndGlyphs">N</text><text x="1186" y="94.4" font-size="18.9" fill="#e8e8e8" textLength="17.4" lengthAdjust="spacingAndGlyphs">W</text><text x="1203.6" y="94.4" font-size="18.9" fill="#a8a8a8" textLength="83" lengthAdjust="spacingAndGlyphs">WWWWWWWWW</text><rect x="1204.5" y="87.2" width="84" height="1.5" fill="#b0b0b0"/><text x="29.5" y="46.5" font-size="19" font-weight="bold" font-style="italic" fill="#101810" textLength="22.5" lengthAdjust="spacingAndGlyphs">LXI</text><path d="M913.8 30.8 L923.6 47.8 H904 Z" fill="#f4e61c" stroke="#1a1a10" stroke-width="1.6" stroke-linejoin="round"/><rect x="912.7" y="35.5" width="2.3" height="7" fill="#111"/><rect x="912.7" y="43.8" width="2.3" height="2.2" fill="#111"/><path d="M532.5 96.1H569.5" stroke="#111" stroke-width="1.3"/><path d="M547 91.2L555.8 96.1L547 101.2Z M532.2 96.1l2.6-2.2l2.2 2.2l-2.2 2.2z M569.8 96.1l-2.4-2.2l-2.2 2.2l2.2 2.2z" fill="#111"/><rect x="19.5" y="84" width="1.6" height="11" fill="#e8ecf8" transform="rotate(12 20 90)"/><rect x="21.5" y="174" width="1.5" height="11" fill="#e8ecf8"/><text x="34.7" y="208.0" font-size="23.3" font-weight="bold" fill="#8f8d8f" textLength="101.3" lengthAdjust="spacing">10 dB/div</text><text x="34.7" y="228.0" font-size="23.3" font-weight="bold" fill="#8f8d8f" textLength="42.6" lengthAdjust="spacing" clip-path="url(#logclip)">Log</text><text x="178.7" y="208.8" font-size="26.3" font-weight="bold" fill="#fff" textLength="178.1" lengthAdjust="spacing" stroke="#fff" stroke-width="0.45">Ref 0.00 dBm</text><text x="38.0" y="304.1" font-size="21.5" font-weight="normal" fill="#9a989a" textLength="41.7" lengthAdjust="spacingAndGlyphs">-10.0</text><text x="38.0" y="379.1" font-size="21.5" font-weight="normal" fill="#9a989a" textLength="41.7" lengthAdjust="spacingAndGlyphs">-20.0</text><text x="38.0" y="454.1" font-size="21.5" font-weight="normal" fill="#9a989a" textLength="41.7" lengthAdjust="spacingAndGlyphs">-30.0</text><text x="38.0" y="529.1" font-size="21.5" font-weight="normal" fill="#9a989a" textLength="41.7" lengthAdjust="spacingAndGlyphs">-40.0</text><text x="38.0" y="604.1" font-size="21.5" font-weight="normal" fill="#9a989a" textLength="41.7" lengthAdjust="spacingAndGlyphs">-50.0</text><text x="38.0" y="679.1" font-size="21.5" font-weight="normal" fill="#9a989a" textLength="41.7" lengthAdjust="spacingAndGlyphs">-60.0</text><text x="38.0" y="754.1" font-size="21.5" font-weight="normal" fill="#9a989a" textLength="41.7" lengthAdjust="spacingAndGlyphs">-70.0</text><text x="38.0" y="829.1" font-size="21.5" font-weight="normal" fill="#9a989a" textLength="41.7" lengthAdjust="spacingAndGlyphs">-80.0</text><text x="38.0" y="904.1" font-size="21.5" font-weight="normal" fill="#9a989a" textLength="41.7" lengthAdjust="spacingAndGlyphs">-90.0</text><text x="33.6" y="1001.0" font-size="27.0" font-weight="bold" fill="#fff" textLength="229.4" lengthAdjust="spacing" stroke="#fff" stroke-width="0.45">Center 2.750 GHz</text><text x="33.6" y="1033.4" font-size="26.7" font-weight="bold" fill="#fff" textLength="216.0" lengthAdjust="spacing" stroke="#fff" stroke-width="0.45">Res BW 3.0 MHz</text><text x="489.0" y="1033.4" font-size="26.7" font-weight="bold" fill="#fff" textLength="177.0" lengthAdjust="spacing" stroke="#fff" stroke-width="0.45">VBW 3.0 MHz</text><text x="1077.3" y="1001.0" font-size="27.0" font-weight="bold" fill="#fff" textLength="208.7" lengthAdjust="spacing" stroke="#fff" stroke-width="0.45">Span 2.000 GHz</text><text x="922.7" y="1033.4" font-size="26.7" font-weight="bold" fill="#fff" textLength="363.3" lengthAdjust="spacing" style="white-space:pre" stroke="#fff" stroke-width="0.45">Sweep  3.333 ms (1001 pts)</text><text x="30.8" y="1074.0" font-size="16.0" font-weight="normal" fill="#6a5618" textLength="35.8" lengthAdjust="spacing">MSG</text><text x="981.0" y="1074.0" font-size="17.4" font-weight="normal" fill="#5c5c5c" textLength="62.0" lengthAdjust="spacing">STATUS</text>
</svg>
</body></html>
